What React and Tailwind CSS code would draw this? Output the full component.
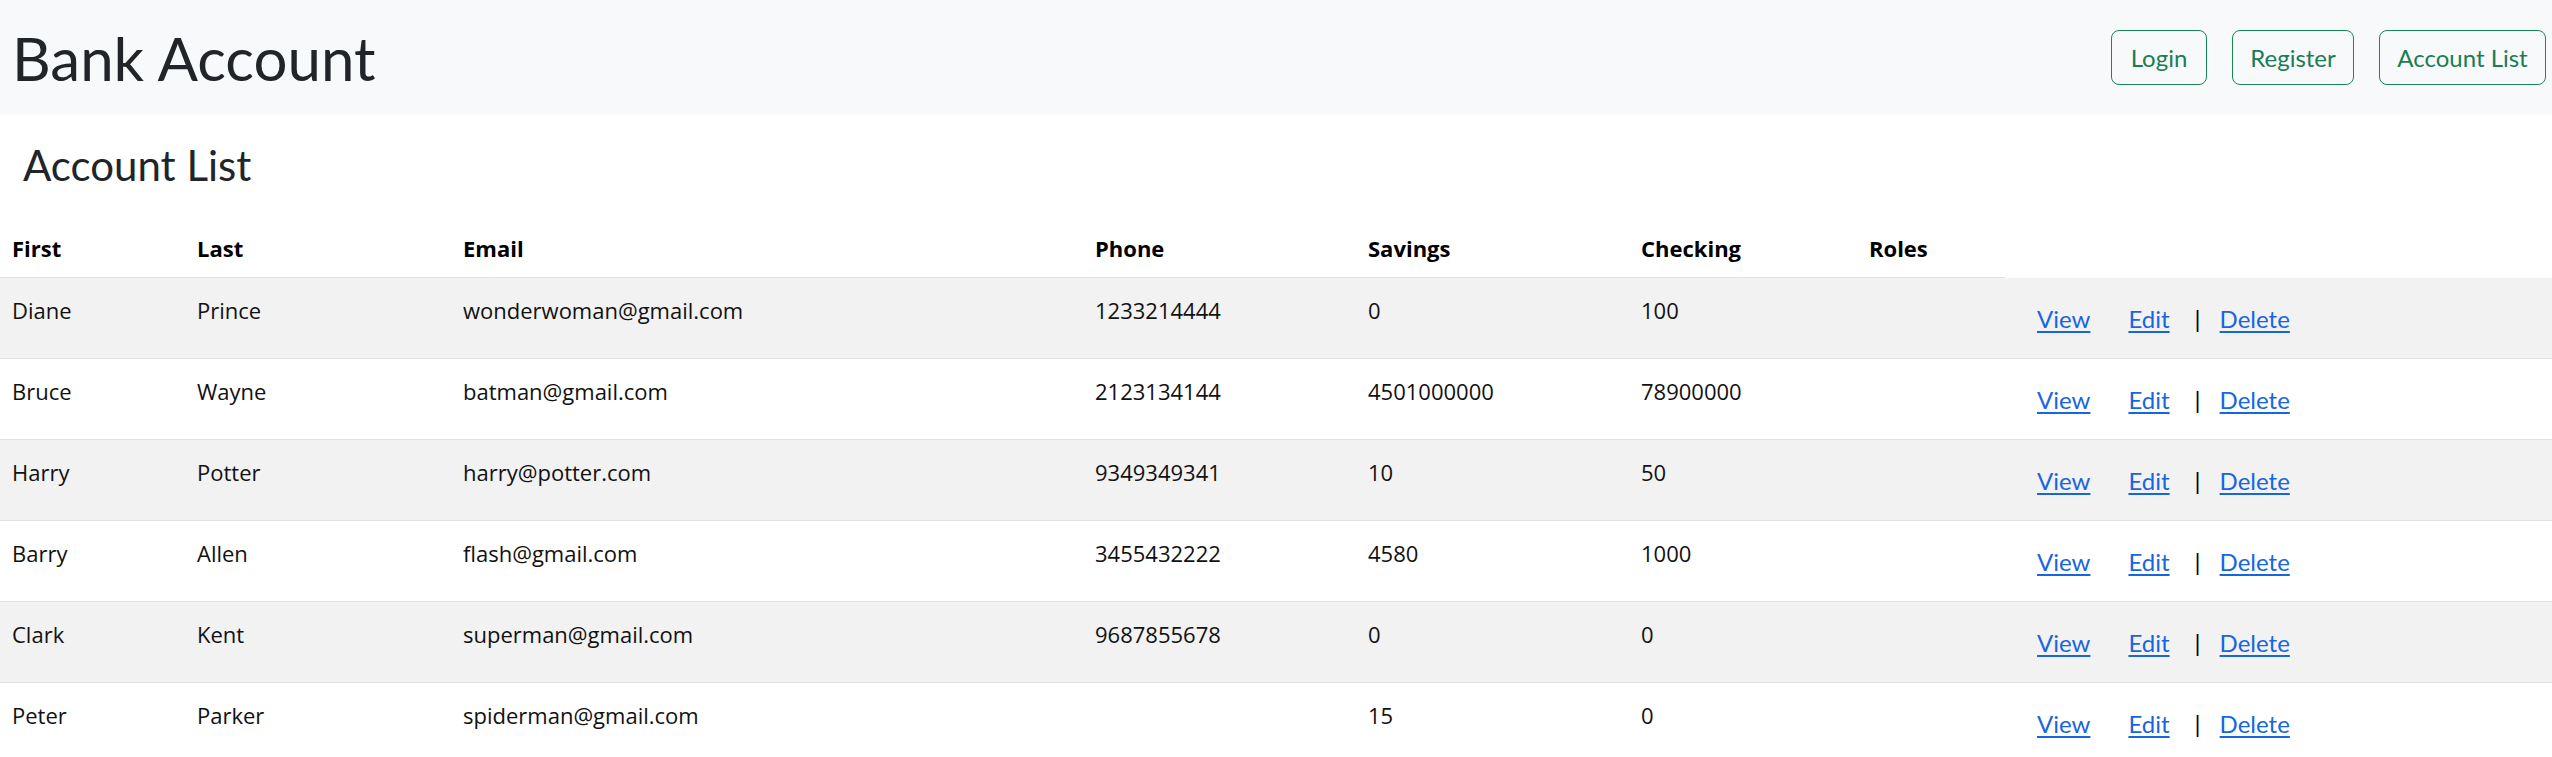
const accounts = [
  { first: "Diane", last: "Prince", email: "wonderwoman@gmail.com", phone: "1233214444", savings: "0", checking: "100", roles: "" },
  { first: "Bruce", last: "Wayne", email: "batman@gmail.com", phone: "2123134144", savings: "4501000000", checking: "78900000", roles: "" },
  { first: "Harry", last: "Potter", email: "harry@potter.com", phone: "9349349341", savings: "10", checking: "50", roles: "" },
  { first: "Barry", last: "Allen", email: "flash@gmail.com", phone: "3455432222", savings: "4580", checking: "1000", roles: "" },
  { first: "Clark", last: "Kent", email: "superman@gmail.com", phone: "9687855678", savings: "0", checking: "0", roles: "" },
  { first: "Peter", last: "Parker", email: "spiderman@gmail.com", phone: "", savings: "15", checking: "0", roles: "" },
];

const headers = ["First", "Last", "Email", "Phone", "Savings", "Checking", "Roles"];

const navButtons = [
  { label: "Login", width: "w-[96px]" },
  { label: "Register", width: "w-[122px]" },
  { label: "Account List", width: "w-[167px]" },
];

export default function App() {
  return (
    <div className="h-screen w-full overflow-hidden bg-white font-['Lato','Liberation_Sans',sans-serif] text-[#212529]">
      {/* Navbar */}
      <header className="flex h-[115px] w-full items-center justify-between bg-[#f8f9fa] pl-[12px] pr-[6px]">
        <h1 className="text-[60px] leading-none">Bank Account</h1>
        <nav className="flex gap-[25px]">
          {navButtons.map((b) => (
            <button
              key={b.label}
              className={`h-[55px] ${b.width} rounded-[8px] border border-[#198754] text-center text-[24px] text-[#1a7d53]`}
            >
              {b.label}
            </button>
          ))}
        </nav>
      </header>

      <h2 className="mb-[31px] ml-[23px] mt-[25px] text-[42px] leading-[1.2]">Account List</h2>

      <table className="w-full table-fixed border-collapse font-['Open_Sans','Liberation_Sans',sans-serif] text-[22px] leading-[1.5] text-[#111]">
        <colgroup>
          <col className="w-[185px]" />
          <col className="w-[266px]" />
          <col className="w-[632px]" />
          <col className="w-[273px]" />
          <col className="w-[273px]" />
          <col className="w-[228px]" />
          <col className="w-[148px]" />
          <col />
        </colgroup>
        <thead>
          <tr>
            {headers.map((h) => (
              <th
                key={h}
                className="h-[56px] border-b border-[#dee2e6] pb-[12px] pl-[12px] pt-[11px] text-left align-top font-bold text-black"
              >
                {h}
              </th>
            ))}
          </tr>
        </thead>
        <tbody>
          {accounts.map((a, i) => (
            <tr key={a.email} className={`border-b border-[#dee2e6] ${i % 2 === 0 ? "bg-[#f2f2f2]" : "bg-white"}`}>
              <td className="h-[81px] pl-[12px] pt-[16px] align-top">{a.first}</td>
              <td className="pl-[12px] pt-[16px] align-top">{a.last}</td>
              <td className="pl-[12px] pt-[16px] align-top">{a.email}</td>
              <td className="pl-[12px] pt-[16px] align-top">{a.phone}</td>
              <td className="pl-[12px] pt-[16px] align-top">{a.savings}</td>
              <td className="pl-[12px] pt-[16px] align-top">{a.checking}</td>
              <td className="pl-[12px] pt-[16px] align-top">{a.roles}</td>
              <td className="pl-[32px] pt-[23px] align-top">
                <div className="flex items-start font-['Lato','Liberation_Sans',sans-serif] text-[24px] leading-[1.5]">
                  <a href="#" className="text-[#1766e0] underline underline-offset-[3px]">View</a>
                  <a href="#" className="ml-[38px] text-[#1766e0] underline underline-offset-[3px]">Edit</a>
                  <span className="ml-[25px] text-black">|</span>
                  <a href="#" className="ml-[19px] text-[#1766e0] underline underline-offset-[3px]">Delete</a>
                </div>
              </td>
            </tr>
          ))}
        </tbody>
      </table>
    </div>
  );
}
